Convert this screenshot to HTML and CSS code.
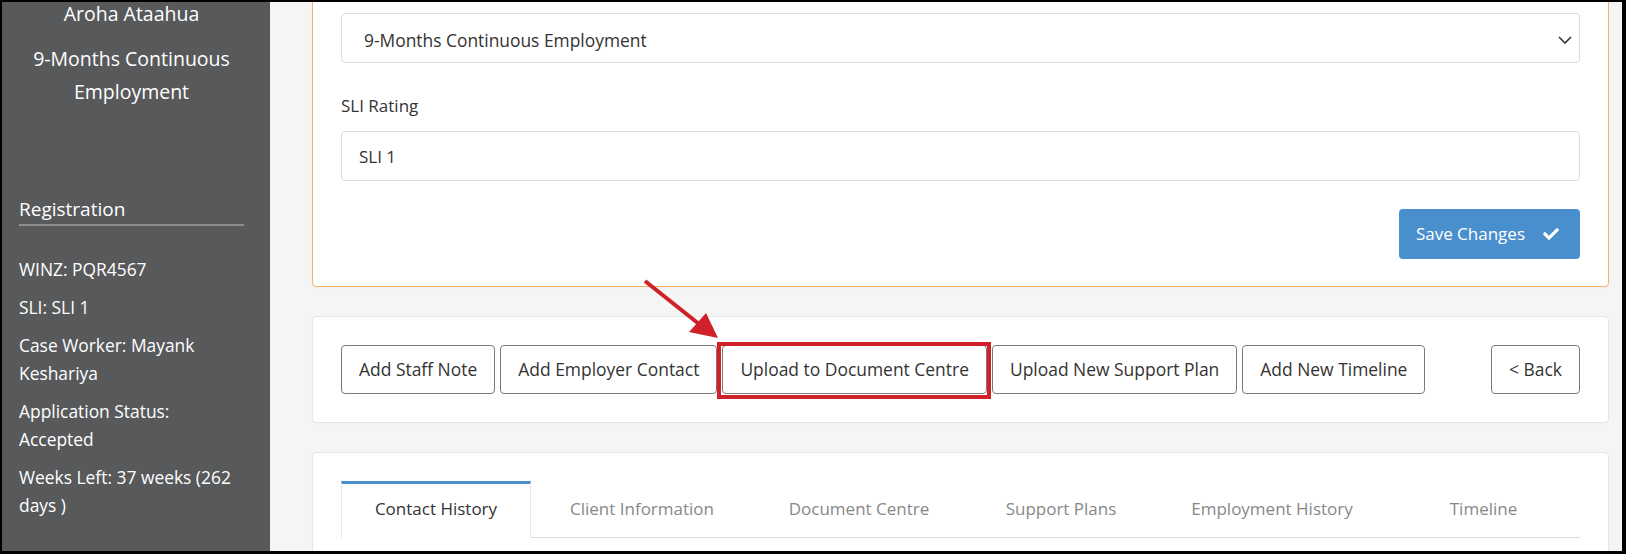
FILE: index.html
```html
<!DOCTYPE html>
<html lang="en">
<head>
    <meta charset="UTF-8">
    <meta name="viewport" content="width=device-width, initial-scale=1.0">
    <title>Client Profile</title>
    <link rel="stylesheet" href="styles.css">
</head>
<body>

<div class="screen">
<div class="page">

    <!-- client summary -->
    <aside class="sidebar">
        <p class="client-name">Aroha Ataahua</p>
        <p class="client-pathway">9-Months Continuous Employment</p>

        <h4 class="side-heading">Registration</h4>
        <div class="side-list">
            <p>WINZ: PQR4567</p>
            <p>SLI: SLI 1</p>
            <p>Case Worker: Mayank Keshariya</p>
            <p>Application Status: Accepted</p>
            <p>Weeks Left: 37 weeks (262 days )</p>
        </div>
    </aside>

    <main class="content">

        <!-- edit form -->
        <section class="card card-edit">
            <div class="select-box">
                <span>9-Months Continuous Employment</span>
                <svg class="chevron" viewBox="0 0 14 8" width="14" height="8">
                    <path d="M1 1l6 6 6-6" fill="none" stroke="#333" stroke-width="1.6"/>
                </svg>
            </div>

            <label class="field-label" for="sli">SLI Rating</label>
            <input class="text-input" id="sli" type="text" value="SLI 1">

            <div class="form-actions">
                <button class="btn-primary">
                    Save Changes
                    <svg viewBox="0 0 512 512" width="16" height="16">
                        <path fill="#fff" d="M173.9 439.4l-166.4-166.4c-10-10-10-26.2 0-36.2l36.2-36.2c10-10 26.2-10 36.2 0L192 312.7 432.1 72.6c10-10 26.2-10 36.2 0l36.2 36.2c10 10 10 26.2 0 36.2l-294.4 294.4c-10 10-26.2 10-36.2 0z"/>
                    </svg>
                </button>
            </div>
        </section>

        <!-- actions -->
        <section class="card action-bar">
            <div class="action-group">
                <button class="btn-outline">Add Staff Note</button>
                <button class="btn-outline">Add Employer Contact</button>
                <button class="btn-outline btn-highlight">
                    Upload to Document Centre
                    <svg class="arrow" viewBox="0 0 76 60" width="76" height="60">
                        <line x1="2" y1="3" x2="56" y2="46" stroke="#d0202a" stroke-width="4"/>
                        <polygon points="75,60 46,54 63,35" fill="#d0202a"/>
                    </svg>
                </button>
                <button class="btn-outline">Upload New Support Plan</button>
                <button class="btn-outline">Add New Timeline</button>
            </div>
            <button class="btn-outline">&lt; Back</button>
        </section>

        <!-- tabs -->
        <section class="card tabs-card">
            <ul class="tabs">
                <li class="tab active">Contact History</li>
                <li class="tab">Client Information</li>
                <li class="tab">Document Centre</li>
                <li class="tab">Support Plans</li>
                <li class="tab">Employment History</li>
                <li class="tab">Timeline</li>
            </ul>
        </section>

    </main>
</div>
</div>

</body>
</html>
```

FILE: styles.css
```css
body {
    margin: 0;
    font-family: "Open Sans", "Segoe UI", sans-serif;
    font-size: 17px;
    color: #333;
}

.screen {
    height: 100vh;
    box-sizing: border-box;
    border-style: solid;
    border-color: #000;
    border-width: 2px 4px 3px 2px;
    overflow: hidden;
    background-color: #f4f5f5;
}

.page {
    display: flex;
    margin-top: -40px;
    min-height: 640px;
}

/* sidebar */
.sidebar {
    width: 268px;
    flex: none;
    box-sizing: border-box;
    padding: 35px 26px 0 17px;
    background-color: #58595b;
    color: #fff;
}

.client-name,
.client-pathway {
    margin: 0;
    font-size: 19.5px;
    line-height: 33px;
    text-align: center;
}

.client-pathway {
    margin-top: 12px;
}

.side-heading {
    margin: 88px 0 0;
    padding-bottom: 2px;
    font-size: 19px;
    font-weight: normal;
    line-height: 26px;
    border-bottom: 2px solid #8d8d8d;
}

.side-list {
    margin-top: 29px;
    font-size: 17.4px;
}

.side-list p {
    margin: 0 0 10px;
    line-height: 28px;
}

/* main column */
.content {
    flex: 1;
    min-width: 0;
    padding: 22px 13px 0 42px;
}

.card {
    background-color: #fff;
    border: 1px solid #e6e6e6;
    border-radius: 4px;
    padding: 28px;
    box-shadow: 0 1px 2px rgba(0, 0, 0, 0.03);
}

.card + .card {
    margin-top: 29px;
}

.card-edit {
    border-color: #f5b461;
    padding-bottom: 27px;
}

.select-box {
    display: flex;
    align-items: center;
    justify-content: space-between;
    height: 50px;
    box-sizing: border-box;
    padding: 3px 7px 0 22px;
    border: 1px solid #ddd;
    border-radius: 4px;
    font-size: 17.4px;
}

.field-label {
    display: block;
    margin: 31px 0 13px;
    line-height: 24px;
}

.text-input {
    display: block;
    width: 100%;
    height: 50px;
    box-sizing: border-box;
    padding: 0 17px;
    border: 1px solid #ddd;
    border-radius: 4px;
    font: inherit;
    color: #333;
}

.form-actions {
    display: flex;
    justify-content: flex-end;
    margin-top: 28px;
}

.btn-primary {
    display: flex;
    align-items: center;
    gap: 18px;
    height: 50px;
    padding: 0 21px 0 17px;
    background-color: #4a8fcd;
    border: none;
    border-radius: 4px;
    color: #fff;
    font: inherit;
    line-height: 24px;
}

/* action buttons */
.action-bar {
    display: flex;
    justify-content: space-between;
    align-items: center;
}

.action-group {
    display: flex;
    gap: 5px;
}

.btn-outline {
    padding: 11px 17px 12px;
    background-color: #fff;
    border: 1px solid #7a7a7a;
    border-radius: 4px;
    color: #333;
    font: inherit;
    font-size: 17.45px;
    line-height: 24px;
}

.btn-highlight {
    position: relative;
}

.btn-highlight::after {
    content: "";
    position: absolute;
    left: -6px;
    right: -5px;
    top: -4px;
    bottom: -6px;
    border: 4px solid #d0202a;
}

.arrow {
    position: absolute;
    left: -80px;
    top: -68px;
    overflow: visible;
}

/* tabs */
.tabs-card {
    padding-bottom: 60px;
}

.tabs {
    display: grid;
    grid-template-columns: 190px 222px 212px 192px 230px 1fr;
    margin: 0;
    padding: 0;
    list-style: none;
    border-bottom: 1px solid #ddd;
}

.tab {
    padding: 13px 0 16px;
    border-top: 3px solid transparent;
    line-height: 24px;
    text-align: center;
    color: #888;
}

.tab.active {
    margin-bottom: -1px;
    padding-bottom: 17px;
    border-top-color: #4a8fcd;
    border-left: 1px solid #e8e8e8;
    border-right: 1px solid #e8e8e8;
    background-color: #fff;
    color: #333;
}
```
